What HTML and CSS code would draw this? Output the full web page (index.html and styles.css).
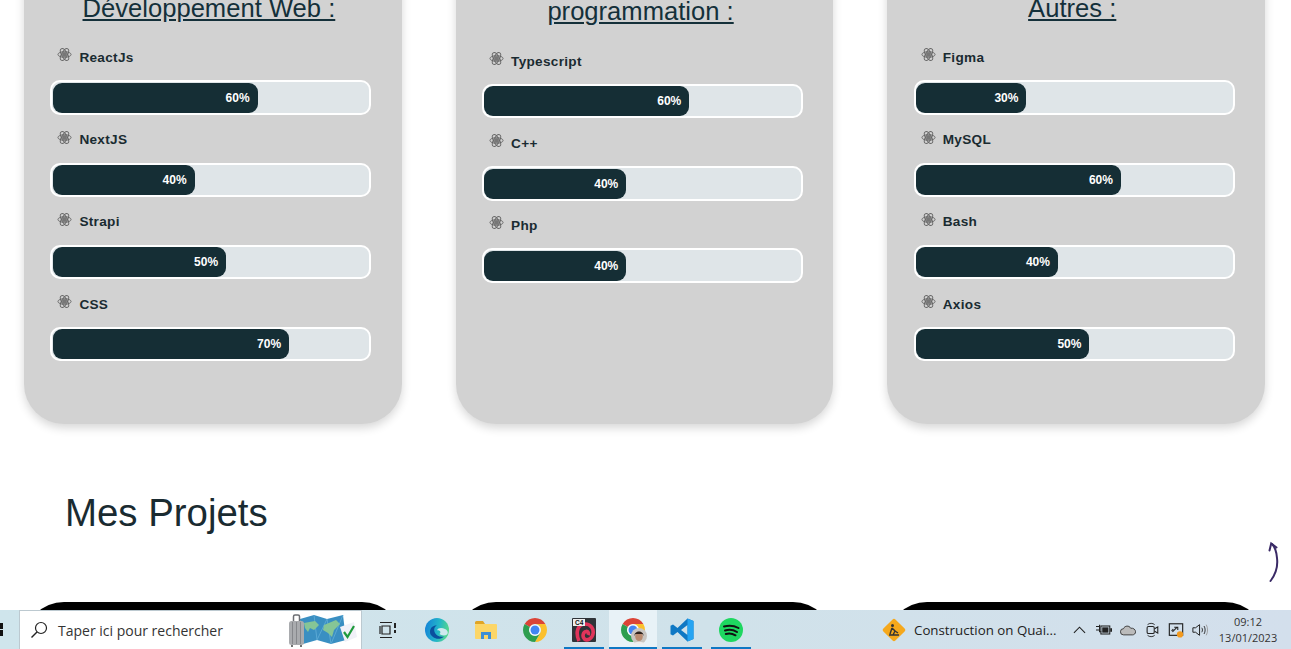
FILE: index.html
```html
<!DOCTYPE html>
<html lang="fr">
<head>
<meta charset="utf-8">
<title>Portfolio</title>
<link rel="stylesheet" href="styles.css">
</head>
<body>
<svg class="defs" width="0" height="0" aria-hidden="true">
  <defs>
    <symbol id="atom" viewBox="0 0 16 16">
      <g fill="none" stroke="#666" stroke-width="1">
        <ellipse cx="8" cy="8" rx="7" ry="3"/>
        <ellipse cx="8" cy="8" rx="7" ry="3" transform="rotate(60 8 8)"/>
        <ellipse cx="8" cy="8" rx="7" ry="3" transform="rotate(120 8 8)"/>
      </g>
      <rect x="5.500" y="5.500" width="5" height="5" fill="#777"/>
    </symbol>
    <symbol id="chrome" viewBox="0 0 24 24">
      <path fill="#db4437" d="M1.610 6A12 12 0 0 1 22.390 6H12A6 6 0 0 0 6.800 9Z"/>
      <path fill="#fbc02d" d="M22.390 6A12 12 0 0 1 12 24L17.200 15A6 6 0 0 0 12 6Z"/>
      <path fill="#2e9e4f" d="M12 24A12 12 0 0 1 1.610 6L6.800 9A6 6 0 0 0 17.200 15Z"/>
      <circle cx="12" cy="12" r="5.600" fill="#fff"/>
      <circle cx="12" cy="12" r="4.500" fill="#4285f4"/>
    </symbol>
  </defs>
</svg>

<div class="viewport">
  <main class="page">
    <section class="skills-grid">
      <article class="card">
        <h2 class="card-title">Développement Web :</h2>
        <div class="skill">
          <div class="skill-label"><svg class="atom"><use href="#atom"/></svg><span>ReactJs</span></div>
          <div class="track"><div class="fill" style="width:60%">60%</div></div>
        </div>
        <div class="skill">
          <div class="skill-label"><svg class="atom"><use href="#atom"/></svg><span>NextJS</span></div>
          <div class="track"><div class="fill" style="width:40%">40%</div></div>
        </div>
        <div class="skill">
          <div class="skill-label"><svg class="atom"><use href="#atom"/></svg><span>Strapi</span></div>
          <div class="track"><div class="fill" style="width:50%">50%</div></div>
        </div>
        <div class="skill">
          <div class="skill-label"><svg class="atom"><use href="#atom"/></svg><span>CSS</span></div>
          <div class="track"><div class="fill" style="width:70%">70%</div></div>
        </div>
      </article>

      <article class="card">
        <h2 class="card-title card-title-double">Langages de<br>programmation :</h2>
        <div class="skill">
          <div class="skill-label"><svg class="atom"><use href="#atom"/></svg><span>Typescript</span></div>
          <div class="track"><div class="fill" style="width:60%">60%</div></div>
        </div>
        <div class="skill">
          <div class="skill-label"><svg class="atom"><use href="#atom"/></svg><span>C++</span></div>
          <div class="track"><div class="fill" style="width:40%">40%</div></div>
        </div>
        <div class="skill">
          <div class="skill-label"><svg class="atom"><use href="#atom"/></svg><span>Php</span></div>
          <div class="track"><div class="fill" style="width:40%">40%</div></div>
        </div>
      </article>

      <article class="card">
        <h2 class="card-title">Autres :</h2>
        <div class="skill">
          <div class="skill-label"><svg class="atom"><use href="#atom"/></svg><span>Figma</span></div>
          <div class="track"><div class="fill" style="width:30%">30%</div></div>
        </div>
        <div class="skill">
          <div class="skill-label"><svg class="atom"><use href="#atom"/></svg><span>MySQL</span></div>
          <div class="track"><div class="fill" style="width:60%">60%</div></div>
        </div>
        <div class="skill">
          <div class="skill-label"><svg class="atom"><use href="#atom"/></svg><span>Bash</span></div>
          <div class="track"><div class="fill" style="width:40%">40%</div></div>
        </div>
        <div class="skill">
          <div class="skill-label"><svg class="atom"><use href="#atom"/></svg><span>Axios</span></div>
          <div class="track"><div class="fill" style="width:50%">50%</div></div>
        </div>
      </article>
    </section>

    <h1 class="section-title">Mes Projets</h1>

    <section class="projects-grid">
      <div class="project"></div>
      <div class="project"></div>
      <div class="project"></div>
    </section>
  </main>

  <svg class="scroll-arrow" viewBox="0 0 20 44" aria-hidden="true">
    <path d="M4.500 40C10 33 12 25 11 17C10.500 11 9 6 6 3" fill="none" stroke="#3a2a66" stroke-width="2" stroke-linecap="round"/>
    <path d="M3.500 9.500L5.200 2.500L10.500 6.500" fill="none" stroke="#3a2a66" stroke-width="2" stroke-linecap="round"/>
  </svg>

  <footer class="taskbar">
    <div class="start"><span></span><span></span></div>

    <div class="search">
      <svg class="search-icon" viewBox="0 0 18 18"><circle cx="11" cy="7" r="5.500" fill="none" stroke="#222" stroke-width="1.200"/><path d="M7 11L1.500 16.500" stroke="#222" stroke-width="1.400"/></svg>
      <span class="search-text">Taper ici pour rechercher</span>
      <svg class="search-art" viewBox="0 0 70 34">
        <path d="M12 6L26 2L39 6L55 2L58 27L43 31L29 27L15 31Z" fill="#3a8fc2"/>
        <path d="M26 2L29 27L39 6L43 31L55 2" fill="none" stroke="#5aa8d4" stroke-width="1"/>
        <path d="M16 10L27 8L31 12L26 17L22 15L20 19L17 15Z" fill="#86c596"/>
        <path d="M36 12L48 7L52 11L46 17L44 24L40 20L35 17Z" fill="#86c596"/>
        <rect x="5.500" y="2" width="6" height="8" rx="1.500" fill="none" stroke="#6b6d72" stroke-width="1.500"/>
        <rect x="1" y="8" width="15" height="24" rx="2.500" fill="#a9abae"/>
        <path d="M4.500 9V31M8.500 9V31M12.500 9V31" stroke="#86888c" stroke-width="1"/>
        <path d="M4 32V34M13 32V34" stroke="#444" stroke-width="1.500"/>
        <path d="M52 14L66 9L69 24L57 29Z" fill="#f1f1f8"/>
        <path d="M56 19L59.500 24L66 13" fill="none" stroke="#1f9a3c" stroke-width="2.200"/>
      </svg>
    </div>

    <div class="task-view">
      <svg viewBox="0 0 18 18"><path d="M1 1.500H13M1 16.500H13M3 5H11V13H3Z M1 5V13" fill="none" stroke="#222" stroke-width="1.200"/><rect x="15" y="2" width="2" height="5" fill="#222"/><rect x="15" y="9" width="2" height="3" fill="#222"/></svg>
    </div>

    <div class="apps">
      <div class="app">
        <svg class="app-icon" viewBox="0 0 24 24">
          <defs>
            <linearGradient id="edge-a" x1="0" y1="0.300" x2="1" y2="0.500"><stop offset="0" stop-color="#1583d8"/><stop offset="0.550" stop-color="#22b5c9"/><stop offset="1" stop-color="#5ad88a"/></linearGradient>
          </defs>
          <circle cx="12" cy="12" r="12" fill="url(#edge-a)"/>
          <path d="M5 14C5 9 9 7 12 7.500C9 8.500 8.500 12 10 15C11.500 18 15.500 19.500 19 18.500C16 21.500 11 21.500 8 19C6 17.500 5 16 5 14Z" fill="#0b4f9e"/>
          <path d="M12 12.500C13 9.500 17 9.500 20 11C23 12.500 23.500 15 22 16.500C20 18 16 17.500 14.500 16C16 15 15.500 13 14 12.500C13 12.200 12.500 12.200 12 12.500Z" fill="#cfe9ee"/>
        </svg>
      </div>
      <div class="app">
        <svg class="app-icon" viewBox="0 0 24 24">
          <path d="M1 4.500A1.500 1.500 0 0 1 2.500 3H9L11 6H1Z" fill="#e0a526"/>
          <rect x="1" y="6" width="22" height="15" rx="1" fill="#fcd667"/>
          <path d="M7 21V14H17V21H14V17H10V21Z" fill="#3d8fd6"/>
        </svg>
      </div>
      <div class="app"><svg class="app-icon"><use href="#chrome"/></svg></div>
      <div class="app app-open">
        <div class="c4-tile">
          <svg viewBox="0 0 24 24"><path d="M7 23C3 14 6 6 13 6C19 6 22 11 21 16C20 21 15 23 12.500 21C10 19 11 14 14 13.500C16 13 17 15 16 17" fill="none" stroke="#e0345a" stroke-width="3.600"/></svg>
          <span class="c4-tag">C4</span>
        </div>
      </div>
      <div class="app app-open app-active">
        <div class="chrome-profile">
          <svg class="app-icon"><use href="#chrome"/></svg>
          <svg class="avatar" viewBox="0 0 16 16"><circle cx="8" cy="8" r="8" fill="#c9c6c2"/><ellipse cx="8" cy="8.500" rx="3.800" ry="4.600" fill="#b98b70"/><path d="M3.500 8C3 2 13 2 12.500 8L11.500 6H4.500Z" fill="#2e221c"/><path d="M2.500 16C3.500 13 12.500 13 13.500 16Z" fill="#eee"/></svg>
        </div>
      </div>
      <div class="app app-open">
        <svg class="app-icon" viewBox="0 0 24 24">
          <path d="M17.500 0.500L7.500 10L3 6.500L0.500 7.800V16.200L3 17.500L7.500 14L17.500 23.500L23.500 21V3ZM17.500 7L11 12L17.500 17Z" fill-rule="evenodd" fill="#0f78c4"/>
          <path d="M17.500 0.500L23.500 3V21L17.500 23.500Z" fill="#26a4f2"/>
        </svg>
      </div>
      <div class="app app-open">
        <svg class="app-icon" viewBox="0 0 24 24">
          <circle cx="12" cy="12" r="12" fill="#1ed760"/>
          <path d="M5 8.500C10 7 15 7.500 19.500 10M6 12.500C10 11.200 14.500 11.800 18 14M6.800 16C10 15 13.500 15.500 16.500 17.300" fill="none" stroke="#111" stroke-width="2" stroke-linecap="round"/>
        </svg>
      </div>
    </div>

    <div class="tray">
      <div class="weather">
        <svg class="weather-icon" viewBox="0 0 24 24">
          <rect x="3.500" y="3.500" width="17" height="17" rx="2" transform="rotate(45 12 12)" fill="#f5a81c"/>
          <circle cx="10.500" cy="7.500" r="1.500" fill="#333"/>
          <path d="M10 10L13 13L11 17M10 10L8 16M13 13L16 15M7 17H17" fill="none" stroke="#333" stroke-width="1.400"/>
        </svg>
        <span class="weather-text">Construction on Quai...</span>
      </div>
      <svg class="tray-chevron" viewBox="0 0 14 8"><path d="M1 7L7 1L13 7" fill="none" stroke="#222" stroke-width="1.200"/></svg>
      <svg class="tray-icon" viewBox="0 0 18 14"><path d="M0 3H4M0 7H4M4 1V9H6" fill="none" stroke="#222" stroke-width="1.200"/><rect x="5.500" y="2.500" width="10" height="9" fill="none" stroke="#222" stroke-width="1.200"/><rect x="7" y="4" width="7" height="6" fill="#222"/><rect x="16" y="5" width="2" height="4" fill="#222"/></svg>
      <svg class="tray-icon" viewBox="0 0 18 14"><path d="M4 12.500A3.500 3.500 0 0 1 4 5.500C5 2 10.500 1.500 12 5C15 4.500 17.500 6.500 17.500 9C17.500 11 16 12.500 14 12.500Z" fill="#bbb" stroke="#333" stroke-width="1"/></svg>
      <svg class="tray-icon" viewBox="0 0 18 18"><path d="M4 3C6 1 10 1 12 3M4 15C6 17 10 17 12 15" fill="none" stroke="#222"/><rect x="3.500" y="5" width="8" height="8" rx="1.500" fill="none" stroke="#222" stroke-width="1.200"/><path d="M12 7.500L15.500 5.500V12.500L12 10.500" fill="none" stroke="#222" stroke-width="1.200"/></svg>
      <svg class="tray-icon" viewBox="0 0 18 18"><rect x="1.500" y="2" width="15" height="13" fill="none" stroke="#222" stroke-width="1.300"/><path d="M5 11L10 6M7 6H11V9M6 8L4 10" fill="none" stroke="#222" stroke-width="1.200"/><circle cx="13.500" cy="14" r="3.500" fill="#f39a1e"/></svg>
      <svg class="tray-icon" viewBox="0 0 18 18"><path d="M1 6.500H4L8.500 3V15L4 11.500H1Z" fill="none" stroke="#222" stroke-width="1.100"/><path d="M11 6.500C12 8 12 10 11 11.500" fill="none" stroke="#222"/><path d="M13.500 4.500C15.200 7 15.200 11 13.500 13.500" fill="none" stroke="#222"/><path d="M16 3C18 6.500 18 11.500 16 15" fill="none" stroke="#999"/></svg>
      <div class="clock"><span>09:12</span><span>13/01/2023</span></div>
    </div>
  </footer>
</div>
</body>
</html>
```
FILE: styles.css
```css
* { box-sizing: border-box; }
html, body { margin: 0; padding: 0; background: #fff; }
body { font-family: "Liberation Sans", Arial, sans-serif; color: #1a2b31; }
.defs { position: absolute; }
.viewport { position: relative; width: 1291px; height: 649px; overflow: hidden; background: #fff; }
.page { margin-top: -50px; }

.skills-grid,
.projects-grid {
  display: grid;
  grid-template-columns: repeat(3, 1fr);
  column-gap: 54px;
  padding: 0 26px 0 24px;
}
.card {
  background: #d2d2d2;
  border-radius: 40px;
  padding: 13px 30.270px 62.600px 26.400px;
  box-shadow: 0 4px 10px rgba(0, 0, 0, .16);
}
.card-title {
  margin: 0 0 9.600px;
  padding: 30px 4px 0 0;
  font-size: 25.600px;
  line-height: 30px;
  font-weight: 400;
  text-align: center;
  text-decoration: underline;
  color: #14303a;
}
.card-title-double { padding-top: 3px; margin-bottom: 10.200px; }

.skill { padding-top: 14.900px; }
.skill-label {
  display: flex;
  align-items: center;
  gap: 7px;
  height: 20px;
  margin-bottom: 12.900px;
  padding-left: 7px;
  font-size: 13.600px;
  font-weight: 700;
  letter-spacing: .3px;
  color: #1a2b31;
}
.atom { width: 15px; height: 15px; margin-top: -5px; flex: none; }
.track {
  height: 34.400px;
  border: 2px solid #fff;
  border-radius: 10px;
  padding: .4px 1.800px 0 .2px;
  background: #dfe5e8;
}
.fill {
  box-sizing: content-box;
  height: 30px;
  padding: 0 8px;
  border-radius: 9px;
  background: #152e35;
  color: #fff;
  font-size: 12px;
  font-weight: 700;
  line-height: 30px;
  text-align: right;
}

.section-title {
  margin: 67px 0 67px 65px;
  font-size: 38.400px;
  line-height: 44px;
  font-weight: 400;
  color: #1a2b31;
}
.project { height: 220px; background: #000; border-radius: 40px; }

.scroll-arrow { position: absolute; left: 1266px; top: 541px; width: 20px; height: 44px; }

.taskbar {
  position: absolute;
  left: 0;
  right: 0;
  bottom: 0;
  height: 39px;
  display: flex;
  align-items: stretch;
  background: linear-gradient(90deg, #cfe5ec 0%, #d0e2ea 55%, #d3dfec 100%);
  font-family: "Open Sans", "Noto Sans", sans-serif;
  color: #222;
}
.start { width: 19px; display: flex; flex-direction: column; justify-content: center; gap: 1px; }
.start span { display: block; width: 3px; height: 6px; background: #111; }
.search {
  width: 343px;
  display: flex;
  align-items: center;
  background: #fff;
  border: 1px solid #bcc9d0;
  border-bottom: 0;
  padding-left: 10px;
}
.search-icon { width: 18px; height: 18px; flex: none; }
.search-text { margin-left: 10px; font-size: 14px; color: #333; white-space: nowrap; }
.search-art { width: 70px; height: 34px; margin-left: auto; margin-right: 3px; flex: none; }
.task-view { width: 51px; display: flex; align-items: center; justify-content: center; }
.task-view svg { width: 18px; height: 18px; }
.apps { display: flex; gap: 1px; }
.app { position: relative; width: 48px; display: flex; align-items: center; justify-content: center; }
.app-open::after {
  content: "";
  position: absolute;
  left: 4px;
  right: 4px;
  bottom: 0;
  height: 2px;
  background: #0f78c4;
}
.app-active { background: #e8f2f7; }
.app-active::after { left: 0; right: 0; }
.app-icon { width: 24px; height: 24px; display: block; }
.c4-tile { position: relative; width: 24px; height: 24px; background: #2f3338; border-radius: 1px; overflow: hidden; }
.c4-tile svg { width: 24px; height: 24px; display: block; }
.c4-tag {
  position: absolute;
  left: 1px;
  top: 1px;
  padding: 0 2px;
  background: #eee;
  color: #111;
  font: 700 6.500px/7px "Liberation Sans", sans-serif;
}
.chrome-profile { position: relative; width: 24px; height: 24px; }
.avatar { position: absolute; left: 10px; top: 10px; width: 16px; height: 16px; }
.tray { margin-left: auto; display: flex; align-items: center; padding-right: 14px; }
.weather { display: flex; align-items: center; width: 190px; margin-right: 1px; }
.weather-icon { width: 24px; height: 24px; flex: none; }
.weather-text { margin-left: 8px; font-size: 13.300px; color: #222; white-space: nowrap; }
.tray-chevron { width: 13px; height: 8px; margin-right: 10px; flex: none; }
.tray-icon { width: 16px; height: 16px; margin-right: 8px; flex: none; }
.clock {
  display: flex;
  flex-direction: column;
  align-items: center;
  width: 58px;
  margin-left: 3px;
  font-size: 11px;
  line-height: 16px;
  color: #333;
  white-space: nowrap;
}
```
